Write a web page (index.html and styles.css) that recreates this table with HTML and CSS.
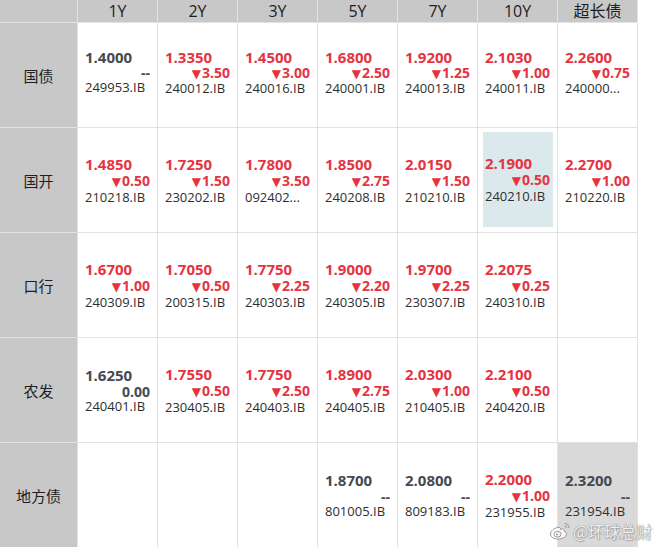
FILE: index.html
```html
<!DOCTYPE html>
<html lang="zh-CN">
<head>
<meta charset="utf-8">
<title>利率债收益率</title>
<link rel="stylesheet" href="styles.css">
</head>
<body>
<div class="page">
  <div class="grid">
    <div class="hd corner"></div>
    <div class="hd">1Y</div>
    <div class="hd">2Y</div>
    <div class="hd">3Y</div>
    <div class="hd">5Y</div>
    <div class="hd">7Y</div>
    <div class="hd">10Y</div>
    <div class="hd">超长债</div>

    <div class="lbl">国债</div>
    <div class="cell tight"><div class="val flat">1.4000</div><div class="chg flat">--</div><div class="code">249953.IB</div></div>
    <div class="cell tight"><div class="val">1.3350</div><div class="chg"><span class="arr">▼</span>3.50</div><div class="code">240012.IB</div></div>
    <div class="cell tight"><div class="val">1.4500</div><div class="chg"><span class="arr">▼</span>3.00</div><div class="code">240016.IB</div></div>
    <div class="cell tight"><div class="val">1.6800</div><div class="chg"><span class="arr">▼</span>2.50</div><div class="code">240001.IB</div></div>
    <div class="cell tight"><div class="val">1.9200</div><div class="chg"><span class="arr">▼</span>1.25</div><div class="code">240013.IB</div></div>
    <div class="cell tight"><div class="val">2.1030</div><div class="chg"><span class="arr">▼</span>1.00</div><div class="code">240011.IB</div></div>
    <div class="cell tight"><div class="val">2.2600</div><div class="chg"><span class="arr">▼</span>0.75</div><div class="code">240000...</div></div>

    <div class="lbl">国开</div>
    <div class="cell"><div class="val">1.4850</div><div class="chg"><span class="arr">▼</span>0.50</div><div class="code">210218.IB</div></div>
    <div class="cell"><div class="val">1.7250</div><div class="chg"><span class="arr">▼</span>1.50</div><div class="code">230202.IB</div></div>
    <div class="cell"><div class="val">1.7800</div><div class="chg"><span class="arr">▼</span>3.50</div><div class="code">092402...</div></div>
    <div class="cell"><div class="val">1.8500</div><div class="chg"><span class="arr">▼</span>2.75</div><div class="code">240208.IB</div></div>
    <div class="cell"><div class="val">2.0150</div><div class="chg"><span class="arr">▼</span>1.50</div><div class="code">210210.IB</div></div>
    <div class="cell selected"><div class="val">2.1900</div><div class="chg"><span class="arr">▼</span>0.50</div><div class="code">240210.IB</div></div>
    <div class="cell"><div class="val">2.2700</div><div class="chg"><span class="arr">▼</span>1.00</div><div class="code">210220.IB</div></div>

    <div class="lbl">口行</div>
    <div class="cell"><div class="val">1.6700</div><div class="chg"><span class="arr">▼</span>1.00</div><div class="code">240309.IB</div></div>
    <div class="cell"><div class="val">1.7050</div><div class="chg"><span class="arr">▼</span>0.50</div><div class="code">200315.IB</div></div>
    <div class="cell"><div class="val">1.7750</div><div class="chg"><span class="arr">▼</span>2.25</div><div class="code">240303.IB</div></div>
    <div class="cell"><div class="val">1.9000</div><div class="chg"><span class="arr">▼</span>2.20</div><div class="code">240305.IB</div></div>
    <div class="cell"><div class="val">1.9700</div><div class="chg"><span class="arr">▼</span>2.25</div><div class="code">230307.IB</div></div>
    <div class="cell"><div class="val">2.2075</div><div class="chg"><span class="arr">▼</span>0.25</div><div class="code">240310.IB</div></div>
    <div class="cell"></div>

    <div class="lbl">农发</div>
    <div class="cell"><div class="val flat">1.6250</div><div class="chg flat">0.00</div><div class="code">240401.IB</div></div>
    <div class="cell"><div class="val">1.7550</div><div class="chg"><span class="arr">▼</span>0.50</div><div class="code">230405.IB</div></div>
    <div class="cell"><div class="val">1.7750</div><div class="chg"><span class="arr">▼</span>2.50</div><div class="code">240403.IB</div></div>
    <div class="cell"><div class="val">1.8900</div><div class="chg"><span class="arr">▼</span>2.75</div><div class="code">240405.IB</div></div>
    <div class="cell"><div class="val">2.0300</div><div class="chg"><span class="arr">▼</span>1.00</div><div class="code">210405.IB</div></div>
    <div class="cell"><div class="val">2.2100</div><div class="chg"><span class="arr">▼</span>0.50</div><div class="code">240420.IB</div></div>
    <div class="cell"></div>

    <div class="lbl">地方债</div>
    <div class="cell"></div>
    <div class="cell"></div>
    <div class="cell"></div>
    <div class="cell"><div class="val flat">1.8700</div><div class="chg flat">--</div><div class="code">801005.IB</div></div>
    <div class="cell"><div class="val flat">2.0800</div><div class="chg flat">--</div><div class="code">809183.IB</div></div>
    <div class="cell"><div class="val">2.2000</div><div class="chg"><span class="arr">▼</span>1.00</div><div class="code">231955.IB</div></div>
    <div class="cell shaded"><div class="val flat">2.3200</div><div class="chg flat">--</div><div class="code">231954.IB</div></div>
  </div>

  <div class="watermark">
    <svg class="wb" width="22" height="18" viewBox="0 0 22 18" aria-hidden="true">
      <path d="M9 5.5c-4 0.5-7.5 3.5-7.5 6.5 0 3 3.5 5 7.5 5s8.5-2 8.5-5c0-1.6-1.4-2.4-2.4-2.7 0.5-1.3 0.3-2.4-1.6-2.4-1 0-2 0.6-2 0.6 0.3-1.6-0.6-2.3-2.5-2z" fill="rgba(255,255,255,0.75)" stroke="#9a9a9a" stroke-width="1"/>
      <ellipse cx="8.5" cy="12.2" rx="3.6" ry="2.8" fill="none" stroke="#9a9a9a" stroke-width="1"/>
      <circle cx="8" cy="12.4" r="1" fill="#9a9a9a"/>
      <path d="M15.5 1.5c2.5 0 4.5 2 4.5 4.5" fill="none" stroke="#9a9a9a" stroke-width="1.2"/>
      <path d="M15.5 4c1.1 0 2 0.9 2 2" fill="none" stroke="#9a9a9a" stroke-width="1.2"/>
    </svg>
    <span class="wm-text">@环球总财</span>
  </div>
</div>
</body>
</html>
```

FILE: styles.css
```css
html, body {
  margin: 0;
  padding: 0;
  background: #ffffff;
}

.page {
  position: relative;
  width: 657px;
  height: 547px;
  overflow: hidden;
  font-family: "Open Sans", "Noto Sans CJK SC", sans-serif;
}

.grid {
  display: grid;
  grid-template-columns: 77px repeat(7, 79px);
  grid-template-rows: 22px repeat(5, 104px);
  gap: 1px;
  padding-right: 1px;
  background: #e2e2e2;
  width: max-content;
}

.hd {
  background: #c8c8c8;
  color: #1e1e1e;
  font-size: 16px;
  line-height: 22px;
  text-align: center;
  font-family: "Open Sans", "Noto Sans CJK SC", sans-serif;
}

.lbl {
  background: #c8c8c8;
  color: #1e1e1e;
  font-size: 15px;
  font-family: "Noto Sans CJK SC", sans-serif;
  display: flex;
  align-items: center;
  justify-content: center;
}

.cell {
  background: #ffffff;
  display: flex;
  flex-direction: column;
  justify-content: center;
  padding: 0 7px;
  min-width: 0;
}

.cell.tight {
  padding-bottom: 6px;
}

.cell.tight .chg {
  line-height: 14px;
}

.cell.selected {
  background: #dbe9ed;
  background-clip: padding-box;
  border-style: solid;
  border-color: #ffffff;
  border-width: 4px 4px 5px 5px;
  padding: 0 3px 0 2px;
}

.cell.shaded {
  background: #d9d9d9;
}

.val {
  font-weight: 700;
  font-size: 15px;
  line-height: 17px;
  color: #e5343f;
  white-space: nowrap;
}

.chg {
  font-weight: 700;
  font-size: 14px;
  line-height: 15px;
  color: #e5343f;
  text-align: right;
  white-space: nowrap;
}

.arr {
  font-family: "DejaVu Sans", sans-serif;
  font-size: 12px;
  margin-right: 1px;
}

.val.flat,
.chg.flat {
  color: #454a4f;
}

.code {
  font-size: 13px;
  line-height: 15px;
  color: #2e2e2e;
  white-space: nowrap;
}

.watermark {
  position: absolute;
  left: 549px;
  top: 521px;
  display: flex;
  align-items: center;
  gap: 2px;
}

.wm-text {
  font-family: "Noto Sans CJK SC", sans-serif;
  font-size: 16px;
  line-height: 20px;
  color: rgba(255, 255, 255, 0.9);
  text-shadow: 0 0 1px #8a8a8a, 0 0 1px #8a8a8a, 1px 1px 1px rgba(0,0,0,0.2);
}
```
